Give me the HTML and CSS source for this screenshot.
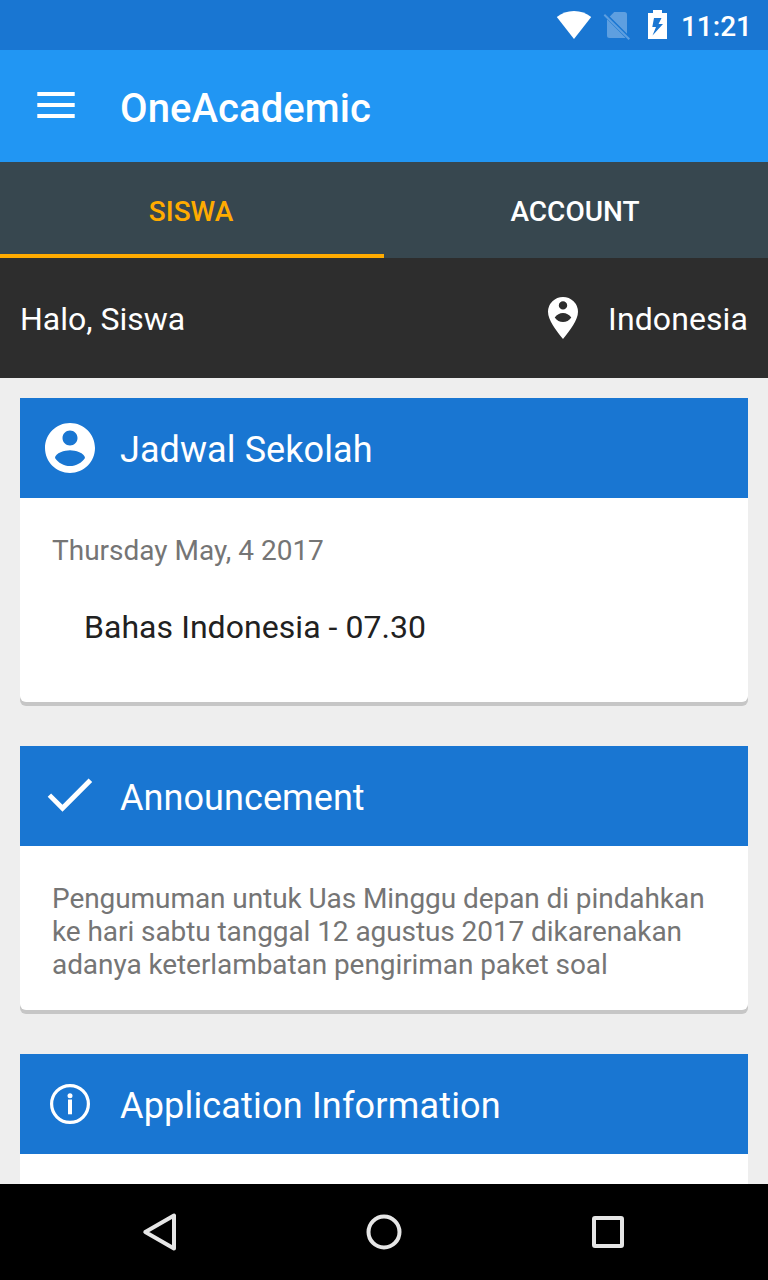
FILE: index.html
```html
<!DOCTYPE html>
<html lang="id">
<head>
<meta charset="utf-8">
<title>OneAcademic</title>
<link rel="stylesheet" href="styles.css">
</head>
<body>
<div class="screen">
  <div class="status-bar">
    <svg class="status-icons" width="114" height="50" viewBox="554 0 114 50">
      <path fill="#fff" d="M574 39 L556.8 17 Q564 11 574 11 Q584 11 591.2 17 Z"/>
      <path fill="#5e9fe0" d="M609.800 16.500 L614.200 12 H624.500 Q627 12 627 14.500 V33.700 Z M607 19.200 L625.500 37.700 Q625 38 624 38 H609.500 Q607 38 607 35.500 Z"/>
      <path fill="none" stroke="#5e9fe0" stroke-width="2" d="M604.300 14.700 L629.300 39.300"/>
      <path fill="#fff" fill-rule="evenodd" d="M648 13 H653 V10 H662 V13 H667 V39 H648 Z M654 18 L652.300 27 H656 L652.500 35.500 L663 24 H658.500 L661.500 18 Z"/>
    </svg>
    <span class="clock">11:21</span>
  </div>
  <header class="app-bar">
    <svg class="menu-icon" width="38" height="26" viewBox="0 0 38 26"><path fill="#fff" d="M0.300 0H37.700V4H0.300ZM0.300 11H37.700V15H0.300ZM0.300 22H37.700V26H0.300Z"/></svg>
    <h1 class="app-title">OneAcademic</h1>
  </header>
  <nav class="tabs">
    <div class="tab tab-active">SISWA</div>
    <div class="tab">ACCOUNT</div>
  </nav>
  <div class="greeting">
    <span class="greeting-name">Halo, Siswa</span>
    <svg class="pin-icon" width="30" height="42" viewBox="0 0 30 42"><path fill="#fff" fill-rule="evenodd" d="M15 0A15 15 0 0 1 30 14.800C30 23 22 33.500 15 42C8 33.500 0 23 0 14.800A15 15 0 0 1 15 0ZM15 4.200A4.200 4.200 0 1 0 15 12.600A4.200 4.200 0 1 0 15 4.200ZM6.700 20.500Q10 16 15 16T23.300 20.500Q20 25 15 25T6.700 20.500Z"/></svg>
    <span class="greeting-place">Indonesia</span>
  </div>
  <main class="content">
    <section class="card">
      <div class="card-header">
        <svg class="card-icon" width="60" height="60" viewBox="0 0 24 24"><path fill="#fff" d="M12 2C6.480 2 2 6.480 2 12s4.480 10 10 10 10-4.480 10-10S17.520 2 12 2zm0 3c1.660 0 3 1.340 3 3s-1.340 3-3 3-3-1.340-3-3 1.340-3 3-3zm0 14.200c-2.500 0-4.710-1.280-6-3.220.030-1.990 4-3.080 6-3.080 1.990 0 5.970 1.090 6 3.080-1.290 1.940-3.500 3.220-6 3.220z"/></svg>
        <h2 class="card-title">Jadwal Sekolah</h2>
      </div>
      <div class="card-body schedule">
        <p class="card-text">Thursday May, 4 2017</p>
        <p class="lesson">Bahas Indonesia - 07.30</p>
      </div>
    </section>
    <section class="card">
      <div class="card-header">
        <svg class="card-icon" width="60" height="60" viewBox="0 0 60 60"><path fill="#fff" d="M7.700 30.800L11.100 27.500L22.500 38.800L48.600 12.500L52.200 16L22.500 45.700Z"/></svg>
        <h2 class="card-title">Announcement</h2>
      </div>
      <div class="card-body announcement">
        <p class="card-text notice">Pengumuman untuk Uas Minggu depan di pindahkan<br>ke hari sabtu tanggal 12 agustus 2017 dikarenakan<br>adanya keterlambatan pengiriman paket soal</p>
      </div>
    </section>
    <section class="card">
      <div class="card-header">
        <svg class="card-icon" width="60" height="60" viewBox="0 0 60 60"><circle cx="30" cy="30" r="18.400" fill="none" stroke="#fff" stroke-width="3.200"/><circle cx="30" cy="21.700" r="2.500" fill="#fff"/><path fill="#fff" d="M28 25.500H32V40.300H28Z"/></svg>
        <h2 class="card-title card-title-wide">Application Information</h2>
      </div>
      <div class="card-body announcement"></div>
    </section>
  </main>
  <div class="nav-bar">
    <svg width="36" height="40" viewBox="0 0 36 40"><path fill="none" stroke="#e6e6e6" stroke-width="4" stroke-linejoin="round" d="M3.300 20L32 3.500V36.500Z"/></svg>
    <svg width="36" height="36" viewBox="0 0 36 36"><circle cx="18" cy="18" r="15.500" fill="none" stroke="#e6e6e6" stroke-width="4"/></svg>
    <svg width="32" height="32" viewBox="0 0 32 32"><rect x="2" y="2" width="28" height="28" rx="1" fill="none" stroke="#e6e6e6" stroke-width="4"/></svg>
  </div>
</div>
</body>
</html>
```

FILE: styles.css
```css
* { box-sizing: border-box; margin: 0; padding: 0; }

body {
  font-family: Roboto, "Noto Sans", sans-serif;
  color: #fff;
}

svg { display: block; flex: none; }

.screen {
  display: flex;
  flex-direction: column;
  width: 768px;
  height: 1280px;
  overflow: hidden;
  background: #eee;
}

.status-bar {
  display: flex;
  flex: none;
  align-items: center;
  justify-content: flex-end;
  gap: 13px;
  height: 50px;
  padding-right: 16px;
  background: #1976d2;
}

.clock {
  padding-top: 3px;
  font-size: 28px;
  font-weight: 500;
  line-height: 34px;
}

.app-bar {
  display: flex;
  flex: none;
  align-items: center;
  gap: 45px;
  height: 112px;
  padding-left: 37px;
  background: #2196f3;
}

.menu-icon { margin-bottom: 2px; }

.app-title {
  padding-top: 6px;
  font-size: 40px;
  font-weight: 500;
  line-height: 48px;
  letter-spacing: 0.08px;
}

.tabs {
  display: grid;
  flex: none;
  grid-template-columns: 1fr 1fr;
  height: 96px;
  background: #37474f;
}

.tab {
  padding: 7px 2px 0 0;
  border-bottom: 4px solid transparent;
  font-size: 28px;
  font-weight: 500;
  line-height: 85px;
  text-align: center;
}

.tab-active {
  border-color: #ffab00;
  color: #ffab00;
}

.greeting {
  display: flex;
  flex: none;
  align-items: center;
  height: 120px;
  padding: 0 20px;
  background: #2d2d2d;
  font-size: 32px;
  line-height: 38px;
}

.greeting-name { flex: 1; padding-top: 2px; }

.greeting-place {
  padding-top: 2px;
  margin-left: 30px;
  letter-spacing: 0.1px;
}

.content {
  display: flex;
  flex: 1;
  flex-direction: column;
  gap: 44px;
  min-height: 0;
  padding: 20px 20px 0;
  overflow: hidden;
}

.card {
  flex: none;
  border-radius: 0 0 6px 6px;
  background: #fff;
  box-shadow: 0 4px 0 #c6c6c6;
}

.card-header {
  display: flex;
  align-items: center;
  gap: 20px;
  height: 100px;
  padding-left: 20px;
  background: #1976d2;
}

.card-title {
  padding-top: 3px;
  font-size: 36px;
  font-weight: 400;
  line-height: 42px;
  letter-spacing: 0.08px;
}

.card-title-wide { letter-spacing: 0.18px; }

.card-body { padding: 36px 32px 0; }

.schedule { height: 204px; }

.announcement { height: 164px; }

.card-text {
  color: #757575;
  font-size: 28px;
  line-height: 33px;
  white-space: nowrap;
}

.notice { letter-spacing: -0.075px; }

.lesson {
  margin-top: 41px;
  padding-left: 32px;
  color: #212121;
  font-size: 32px;
  line-height: 38px;
  letter-spacing: 0.05px;
}

.nav-bar {
  display: grid;
  flex: none;
  grid-template-columns: repeat(3, 224px);
  align-items: center;
  justify-content: center;
  justify-items: center;
  height: 96px;
  background: #000;
}
```
